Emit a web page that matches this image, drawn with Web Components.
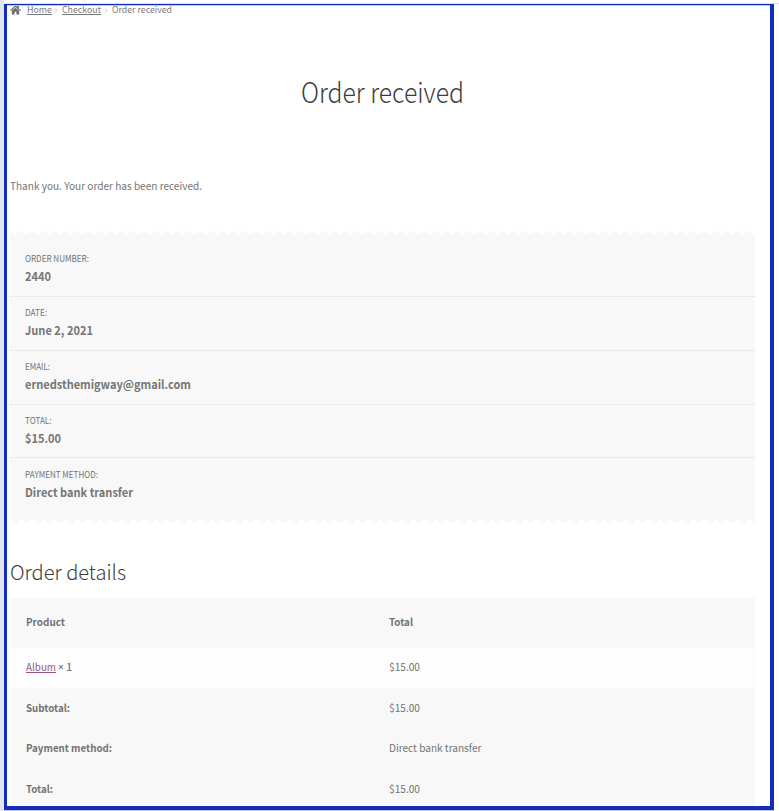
<!DOCTYPE html>
<html lang="en"><head><meta charset="utf-8"><title>Order received</title>
<style>
body{margin:0;background:#fff;font-family:"Noto Sans CJK SC","Noto Sans",sans-serif;color:#737373}
</style></head><body>
<order-page></order-page>
<script>
const define=(name,html,ready)=>{
  const t=document.createElement('template');t.innerHTML=html;
  customElements.define(name,class extends HTMLElement{
    constructor(){super();this.attachShadow({mode:'open'}).append(t.content.cloneNode(true));}
    connectedCallback(){if(ready)ready(this,this.shadowRoot);}
  });
};

/* A line of text condensed horizontally to fill the given measure. */
define('fit-text',`<style>:host{display:inline-block;white-space:nowrap;line-height:inherit;text-align:left}span{display:inline-block;transform-origin:0 50%}:host([underlined]) span{text-decoration:underline;text-decoration-thickness:1px;text-underline-offset:.6px;text-decoration-skip-ink:none}</style><span><slot></slot></span>`,(el,root)=>{
  const s=root.querySelector('span');
  const w=parseFloat(el.getAttribute('measure'));
  if(w){
    s.style.transform='scaleX('+w/s.getBoundingClientRect().width+')';
    el.style.width=w+'px';
  }
});

define('bread-crumbs',`<style>
:host{display:flex;align-items:center;height:14px;font-size:8.9px;line-height:14px;color:#7a7a7a}
svg{display:block}.home{width:11px;height:10px;margin-right:5.5px}.sep{width:4px;height:5px;margin:0 4px 0 2.5px}
</style>
<svg class="home" viewBox="0 0 11 10"><path d="M5.5 0.5 0.1 5.1l.7.8L5.5 2l4.7 3.9.7-.8-2-1.7V1H7.4v1.1z" fill="#6d6d6d"/><path d="M5.5 2.7 1.8 5.7V9.5h2.8V6.8h1.8v2.7h2.8V5.7z" fill="#6d6d6d"/></svg>
<fit-text underlined measure="25">Home</fit-text>
<svg class="sep" viewBox="0 0 4 5"><path d="M1 .4 3 2.5 1 4.6" fill="none" stroke="#c8c8c8"/></svg>
<fit-text underlined measure="39">Checkout</fit-text>
<svg class="sep" viewBox="0 0 4 5"><path d="M1 .4 3 2.5 1 4.6" fill="none" stroke="#c8c8c8"/></svg>
<fit-text measure="60">Order received</fit-text>`);

define('receipt-item',`<style>
:host{display:block;box-sizing:border-box;height:54px;padding:8px 0 0 14.6px}
:host(:nth-child(4)){height:53px}
:host(:last-child){padding-top:9px}
.l{font-size:8.8px;line-height:16px;text-transform:uppercase;height:16px}
.v{font-size:11.9px;line-height:20px;height:20px;margin-top:-1px;font-weight:700;color:#767676}
</style><div class="l"><slot name="label"></slot></div><div class="v"><slot></slot></div>`);

define('receipt-card',`<style>
:host{display:block;width:745px;height:294px}
svg{display:block}
.body{height:284px;background:#f8f8f8;box-sizing:border-box;padding-top:8px}
::slotted(receipt-item:not(:last-child)){background:repeating-linear-gradient(90deg,#dfdfdf 0 1px,#f4f4f4 1px 2px) 0 100%/100% 1px no-repeat}
</style>
<svg width="745" height="5"><defs><pattern id="a" width="11.2" height="5" patternUnits="userSpaceOnUse"><path d="M0 5V0L5.6 5 11.2 0V5z" fill="#f8f8f8"/></pattern></defs><rect width="745" height="5" fill="url(#a)"/></svg>
<div class="body"><slot></slot></div>
<svg width="745" height="5"><defs><pattern id="b" width="11.2" height="5" patternUnits="userSpaceOnUse"><path d="M0 0 5.6 5 11.2 0z" fill="#f8f8f8"/></pattern></defs><rect width="745" height="5" fill="url(#b)"/></svg>`);

define('order-row',`<style>
:host{display:grid;grid-template-columns:363px 1fr;align-items:center;box-sizing:border-box;width:745px;height:40.5px;padding:0 0 1px 16px;font-size:10.4px;line-height:18px;background:#f8f8f8}
:host([head]){height:50px;padding-bottom:2px}:host([item]){background:#fdfdfd;height:40px;padding-bottom:2px}
.k{font-weight:700}:host([item]) .k{font-weight:400}:host([head]) .t{font-weight:700}
</style><div class="k"><slot name="key"></slot></div><div class="t"><slot></slot></div>`);

define('order-page',`<style>
:host{display:block;position:relative;box-sizing:border-box;width:779px;height:811px;overflow:hidden;padding:3px 0 0 10px;background:#fff}
.frame{position:absolute;box-sizing:border-box;inset:4px 5px 1px 4px;border:solid #112db9;border-width:1px 4px 4px 3px;box-shadow:inset 0 1px #b9c5f0}
.edge{position:absolute;left:0;top:0;width:4px;height:811px;background:#e2e6ec}
.top{position:absolute;left:4px;top:3px;width:775px;height:1px;background:#dfe1e8}
.foot{position:absolute;left:4px;top:810px;width:770px;height:1px;background:#b9c5f0}
h1,h2,p{margin:0;font-weight:300;color:#3c3c3c}
h1{width:745px;text-align:center;margin-top:49px;height:50px;line-height:50px;font-size:28px}
p{margin-top:60px;height:20px;line-height:20px;font-size:10.4px;font-weight:400;color:#737373}
receipt-card{margin-top:34px}
h2{margin-top:30px;height:34px;line-height:34px;font-size:20.6px}
order-row:first-of-type{margin-top:10px}
a{color:#96588a}
.times{font-family:"Noto Sans",sans-serif}
</style>
<bread-crumbs></bread-crumbs>
<h1><fit-text measure="163">Order received</fit-text></h1>
<p><fit-text measure="192">Thank you. Your order has been received.</fit-text></p>
<receipt-card>
<receipt-item><fit-text slot="label" measure="64">Order number:</fit-text><fit-text measure="26">2440</fit-text></receipt-item>
<receipt-item><fit-text slot="label" measure="22">Date:</fit-text><fit-text measure="68">June 2, 2021</fit-text></receipt-item>
<receipt-item><fit-text slot="label" measure="25">Email:</fit-text><fit-text measure="166">ernedsthemigway@gmail.com</fit-text></receipt-item>
<receipt-item><fit-text slot="label" measure="26.5">Total:</fit-text><fit-text measure="36">$15.00</fit-text></receipt-item>
<receipt-item><fit-text slot="label" measure="73">Payment method:</fit-text><fit-text measure="108">Direct bank transfer</fit-text></receipt-item>
</receipt-card>
<h2><fit-text measure="116">Order details</fit-text></h2>
<order-row head><fit-text slot="key" measure="39">Product</fit-text><fit-text measure="24">Total</fit-text></order-row>
<order-row item><span slot="key"><a href="#"><fit-text underlined measure="30">Album</fit-text></a> <fit-text style="font-weight:500" measure="14"><span class="times">×</span> 1</fit-text></span><fit-text measure="31">$15.00</fit-text></order-row>
<order-row><fit-text slot="key" measure="44">Subtotal:</fit-text><fit-text measure="31">$15.00</fit-text></order-row>
<order-row><fit-text slot="key" measure="86">Payment method:</fit-text><fit-text measure="92.5">Direct bank transfer</fit-text></order-row>
<order-row><fit-text slot="key" measure="27">Total:</fit-text><fit-text measure="31">$15.00</fit-text></order-row>
<div class="edge"></div><div class="top"></div><div class="frame"></div><div class="foot"></div>`);
</script></body></html>
